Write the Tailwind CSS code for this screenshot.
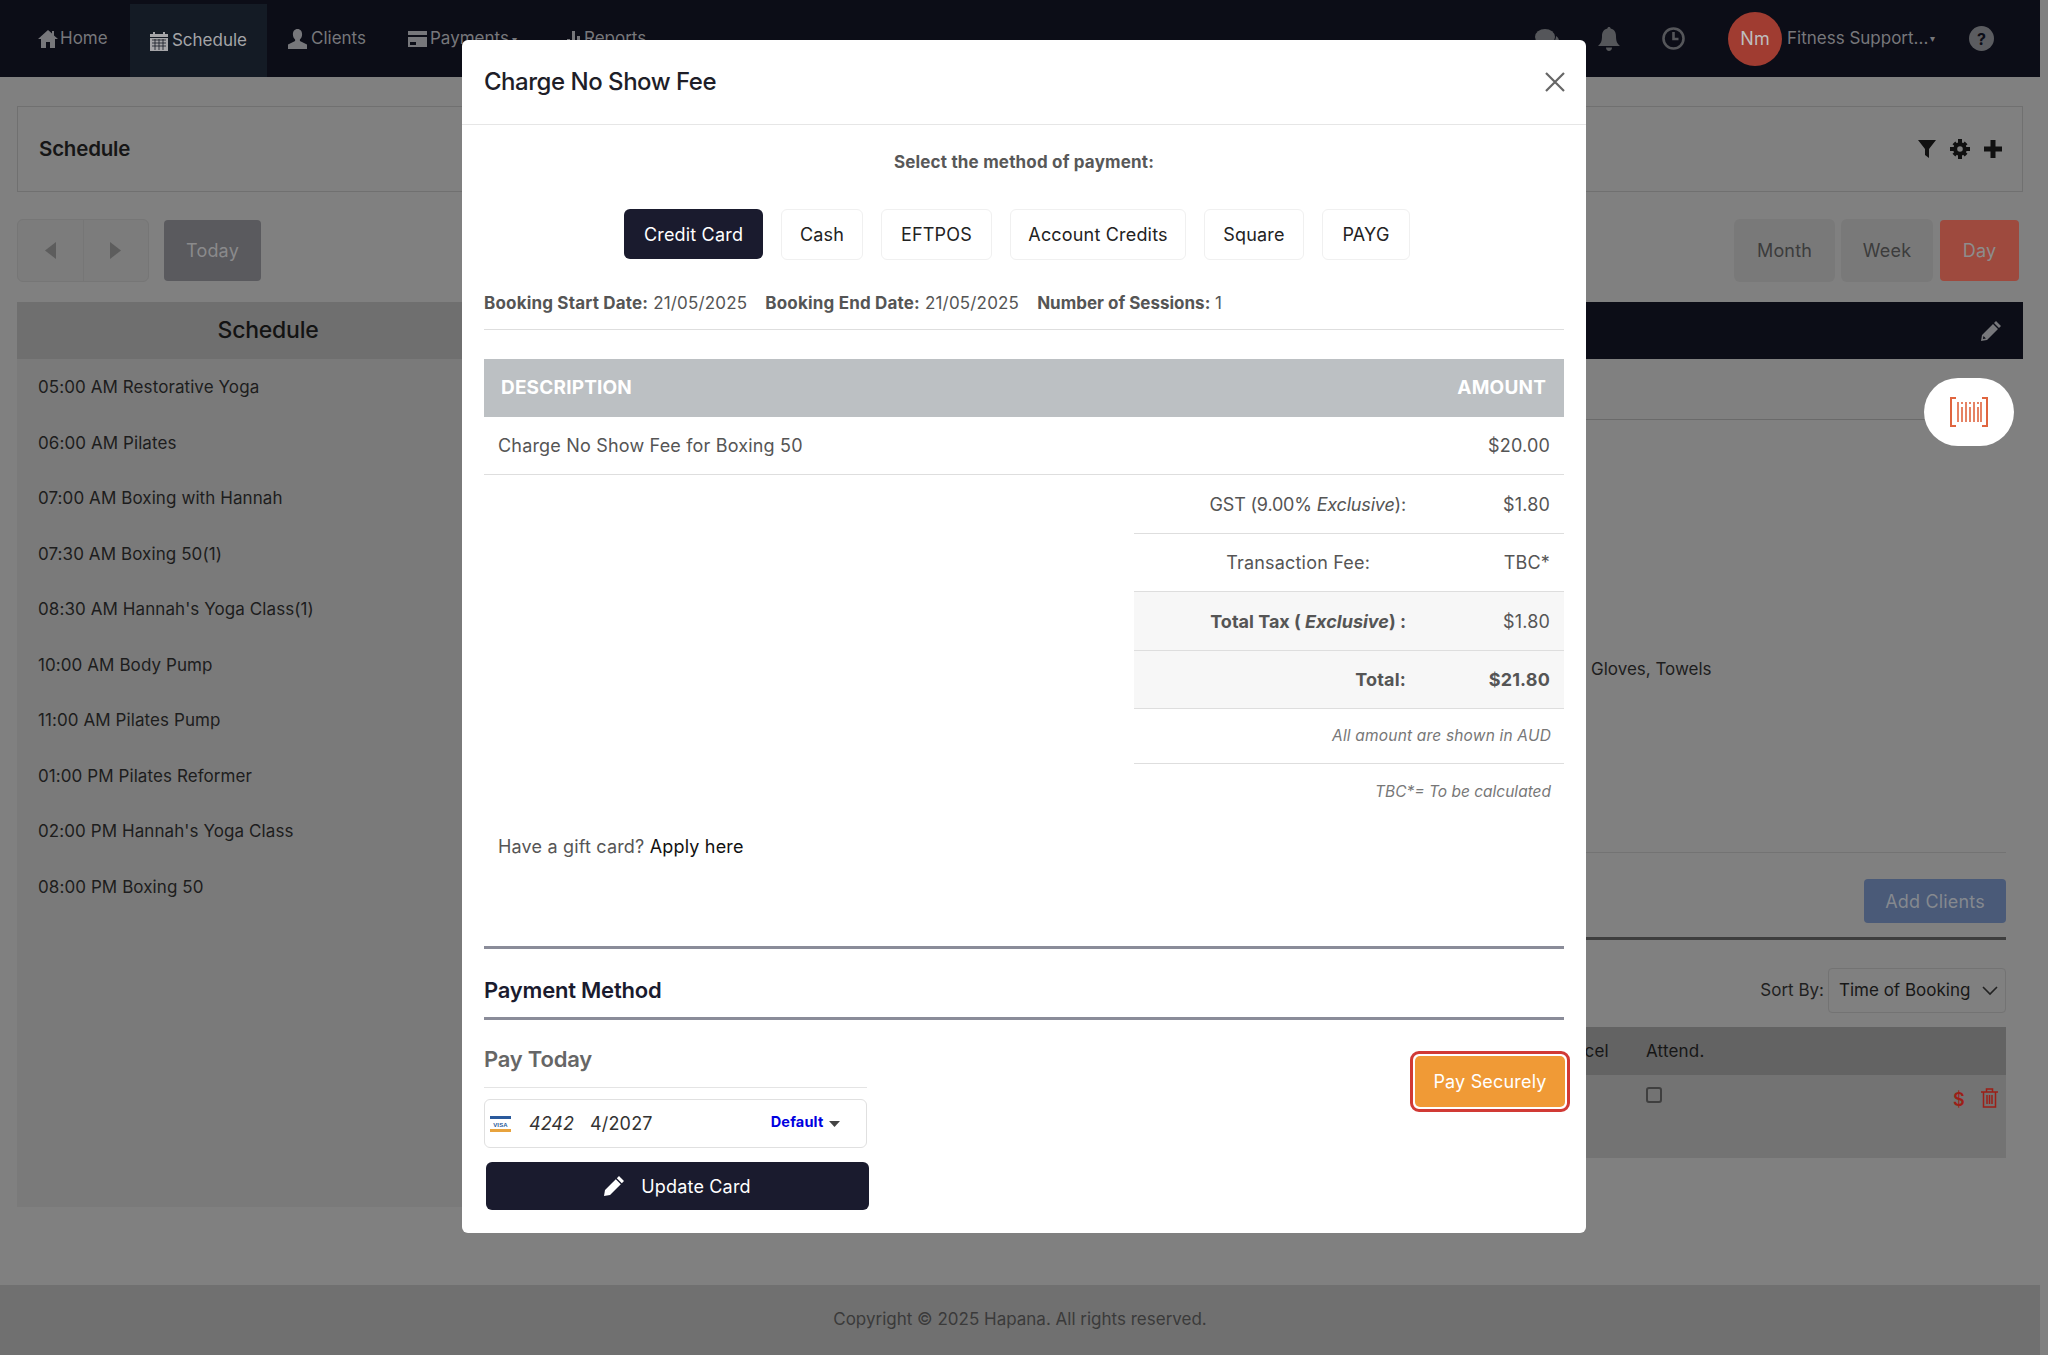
<!DOCTYPE html>
<html lang="en"><head><meta charset="utf-8"><title>Charge No Show Fee</title>
<script src="https://cdn.jsdelivr.net/npm/@tailwindcss/browser@4"></script></head>
<body class="m-0">
<div class="relative w-[2048px] h-[1355px] overflow-hidden bg-[#808080] font-['Inter',sans-serif] text-[18px] tracking-[0.01em] text-[#1c1c1c]">
 <div class="w-[2040px] h-full flex flex-col">
  <!-- navbar -->
  <nav class="h-[77px] shrink-0 bg-[#0c0d17] flex items-stretch text-[#77777b] text-[17px] tracking-normal">
   <div class="flex items-center pl-[38px] pt-[1px] w-[130px] gap-[2px]">
    <svg class="w-[20px] h-[20px]" viewBox="0 0 20 20" fill="#77777b"><path d="M10 1 L0 10 H3 V19 H8 V13 H12 V19 H17 V10 H20 L16 6.4 V2 H14 V4.6Z"/></svg><span>Home</span></div>
   <div class="flex items-center justify-center mt-[4px] w-[137px] gap-[4px] bg-[#141b25] text-[#a5a5a8]">
    <svg class="w-[18px] h-[20px]" viewBox="0 0 18 20" fill="#a5a5a8"><path d="M0 3h3V1h2v2h8V1h2v2h3v3H0zM0 7h18v13H0z"/><path d="M2 9h14M2 12h14M2 15h14M5 8v11M9 8v11M13 8v11" stroke="#141b25" stroke-width=".8"/></svg><span>Schedule</span></div>
   <div class="flex items-center pl-[21px] pt-[1px] w-[137px] gap-[4px]">
    <svg class="w-[19px] h-[20px]" viewBox="0 0 19 20" fill="#77777b"><path d="M9.5 0c3 0 4.6 2.4 4.6 5.4 0 2.2-1 4-2.2 5v1.6L19 15.5V20H0v-4.5L7.100 12v-1.600c-1.200-1-2.200-2.800-2.200-5C4.900 2.400 6.500 0 9.500 0Z"/></svg><span>Clients</span></div>
   <div class="flex items-center pl-[4px] pt-[1px] w-[163px] gap-[3px]">
    <svg class="w-[19px] h-[16px]" viewBox="0 0 19 16" fill="#77777b"><path d="M0 0h19v4H0zM0 6h19v10H0z"/><path d="M2 11h6v3H2z" fill="#0c0d17"/></svg><span>Payments</span><span class="text-[10px]">▾</span></div>
   <div class="flex items-center gap-[3px] pt-[1px]">
    <svg class="w-[14px] h-[16px]" viewBox="0 0 14 16" fill="#77777b"><path d="M0 8h3v8H0zM5 0h3v16H5zM10 5h3v11h-3z"/></svg><span>Reports</span></div>
   <div class="ml-auto flex items-center text-[#6d6d70]">
    <svg class="w-[24px] h-[22px]" viewBox="0 0 24 22" fill="#55565a"><ellipse cx="10" cy="9" rx="10" ry="8"/><path d="M5 14 4 20l6-4z"/><path d="M21 8c2 1 3 3 3 5s-1 3-2 4l.5 3-3.500-2c-2 .3-4-.2-5-1.500 4-.5 7-4 7-8.500z"/></svg>
    <svg class="ml-[39px] w-[22px] h-[24px]" viewBox="0 0 22 24" fill="#55565a"><path d="M11 0c1 0 1.600.7 1.600 1.600C16.500 2.500 18 5.500 18 9c0 5 1 7.500 4 10H0c3-2.500 4-5 4-10 0-3.500 1.500-6.500 5.400-7.400C9.400.7 10 0 11 0zM8 20.500h6c0 2-1.300 3.500-3 3.500s-3-1.500-3-3.500z"/></svg>
    <svg class="ml-[42px] w-[23px] h-[23px]" viewBox="0 0 23 23" fill="none" stroke="#55565a" stroke-width="2.600"><circle cx="11.500" cy="11.500" r="10"/><path d="M11.500 5v7h5"/></svg>
    <div class="ml-[43px] w-[54px] h-[54px] rounded-full bg-[#a03c31] flex items-center justify-center text-[#bebebe] text-[18px]">Nm</div>
    <span class="ml-[5px] text-[#77777b] text-[17px] w-[143px] whitespace-nowrap">Fitness Support...</span>
    <span class="text-[10px] text-[#77777b] w-[12px]">▾</span>
    <div class="ml-[27px] mr-[46px] w-[25px] h-[25px] rounded-full bg-[#5b5c60] flex items-center justify-center text-[#0c0d17] text-[16px] font-bold">?</div>
   </div>
  </nav>
  <!-- page head -->
  <main class="px-[17px] flex-1 flex flex-col">
   <section class="mt-[29px] h-[86px] border border-[#707070] flex items-center justify-between pl-[21px] pr-[20px]">
    <h1 class="text-[20.500px] font-semibold tracking-[-0.01em] text-[#161616]">Schedule</h1>
    <div class="flex items-center gap-[14px]">
     <svg class="w-[18px] h-[18px]" viewBox="0 0 18 18" fill="#111"><path d="M0 0h18L11 9v9l-4-3V9z"/></svg>
     <svg class="w-[20px] h-[20px]" viewBox="0 0 20 20" fill="#111"><circle cx="10" cy="10" r="4.800" fill="none" stroke="#111" stroke-width="4"/><path d="M8 0h4v4H8zM8 16h4v4H8zM0 8h4v4H0zM16 8h4v4h-4zM2.500 5.300 5.300 2.500 7.500 5 5 7.500zM14.700 17.500l2.800-2.800-2.500-2.200-2.500 2.500zM2.500 14.700l2.800 2.800 2.200-2.500L5 12.500zM17.500 5.300l-2.800-2.800L12.500 5 15 7.500z"/></svg>
     <svg class="w-[18px] h-[18px]" viewBox="0 0 18 18" fill="#111"><path d="M6.500 0h5v6.500H18v5h-6.500V18h-5v-6.500H0v-5h6.500z"/></svg>
    </div>
   </section>
   <section class="mt-[27px] h-[63px] flex items-center justify-between pr-[4px]">
    <div class="flex items-center gap-[15px]">
     <div class="flex w-[132px] h-[63px] rounded-[6px] bg-[#7c7c7c] border border-[#767676]">
      <div class="flex-1 flex items-center justify-center border-r border-[#767676]"><svg class="w-[11px] h-[17px]" viewBox="0 0 11 17" fill="#5d5d5d"><path d="M11 0v17L0 8.500z"/></svg></div>
      <div class="flex-1 flex items-center justify-center"><svg class="w-[11px] h-[17px]" viewBox="0 0 11 17" fill="#5d5d5d"><path d="M0 0v17l11-8.500z"/></svg></div>
     </div>
     <div class="w-[97px] h-[61px] rounded-[4px] bg-[#5a5a5e] text-[#8a8a8c] flex items-center justify-center">Today</div>
    </div>
    <div class="flex items-center gap-[6px] text-[#3c3c3c]">
     <div class="w-[101px] h-[63px] rounded-[6px] bg-[#797979] flex items-center justify-center">Month</div>
     <div class="w-[92px] h-[63px] rounded-[6px] bg-[#797979] flex items-center justify-center">Week</div>
     <div class="w-[79px] h-[61px] rounded-[4px] bg-[#9e4a3e] text-[#8d8d8d] flex items-center justify-center ml-[1px]">Day</div>
    </div>
   </section>
   <section class="mt-[20px] flex gap-[16px] items-start">
    <aside class="w-[502px] h-[905px] bg-[#7a7a7a] shrink-0">
     <h2 class="h-[57px] bg-[#6f6f6f] flex items-center justify-center text-[23px] font-medium tracking-[-0.01em] text-[#131313]">Schedule</h2>
     <ul class="text-[17px] tracking-[0.005em] text-[#1d1d1d] pl-[21px] pt-[1px]">
      <li class="h-[55.5px] flex items-center">05:00 AM Restorative Yoga</li>
      <li class="h-[55.5px] flex items-center">06:00 AM Pilates</li>
      <li class="h-[55.5px] flex items-center">07:00 AM Boxing with Hannah</li>
      <li class="h-[55.5px] flex items-center">07:30 AM Boxing 50(1)</li>
      <li class="h-[55.5px] flex items-center">08:30 AM Hannah's Yoga Class(1)</li>
      <li class="h-[55.5px] flex items-center">10:00 AM Body Pump</li>
      <li class="h-[55.5px] flex items-center">11:00 AM Pilates Pump</li>
      <li class="h-[55.5px] flex items-center">01:00 PM Pilates Reformer</li>
      <li class="h-[55.5px] flex items-center">02:00 PM Hannah's Yoga Class</li>
      <li class="h-[55.5px] flex items-center">08:00 PM Boxing 50</li>
     </ul>
    </aside>
    <div class="flex-1 min-w-0">
     <div class="h-[57px] bg-[#0c0d17] flex items-center justify-end pr-[22px]">
      <svg class="w-[20px] h-[20px]" viewBox="0 0 20 20" fill="#77777b"><path d="M15 0l5 5-2 2-5-5zM12 3l5 5L6 19l-6 1 1-6zM2.500 15l-.6 3 3-.6z"/></svg>
     </div>
     <div class="mx-[17px] h-[61px] border-b border-[#6a6a6a]"></div>
     <p class="pl-[1056px] pt-[238px] text-[17px] tracking-normal text-[#1d1d1d] leading-[22px]">Gloves, Towels</p>
     <div class="mx-[17px] h-[173px] border-b border-[#737373]"></div>
     <div class="mx-[17px] h-[87px] border-b-[3px] border-[#3e3e3e] flex justify-end items-start pt-[26px]">
      <div class="w-[142px] h-[44px] rounded-[4px] bg-[#4a5a78] text-[#85898f] flex items-center justify-center">Add Clients</div>
     </div>
     <div class="mx-[17px] mt-[28px] h-[45px] flex items-center justify-end gap-[4px] text-[17px] tracking-normal">
      <span class="text-[#1f1f1f]">Sort By:</span>
      <div class="w-[178px] h-[45px] border border-[#737373] rounded-[4px] flex items-center justify-between pl-[10px] pr-[7px] text-[#171717]"><span class="whitespace-nowrap">Time of Booking</span>
       <svg class="w-[16px] h-[10px] shrink-0" viewBox="0 0 16 10" fill="none" stroke="#222" stroke-width="1.600"><path d="M1 1l7 7 7-7"/></svg></div>
     </div>
     <div class="mx-[17px] mt-[14px] h-[48px] bg-[#636363] flex items-center pl-[1000px] pt-[1px] text-[#161616] text-[17px]">
      <span class="w-[56px] text-right whitespace-nowrap">Cancel</span><span class="ml-[38px]">Attend.</span>
     </div>
     <div class="mx-[17px] h-[83px] bg-[#737373] flex items-start pt-[12px]">
      <div class="ml-[1094px] w-[16px] h-[16px] rounded-[3px] border-2 border-[#3f3f3f]"></div>
      <span class="ml-[291px] mt-[3px] text-[#9c1f17] text-[18px] font-semibold leading-[20px]">$</span>
      <svg class="ml-[16px] mt-[1px] w-[17px] h-[20px]" viewBox="0 0 17 20" fill="none" stroke="#9c1f17" stroke-width="1.500"><path d="M0 4h17M5.500 4V1h6v3M2.500 4v15h12V4M6 7v9M8.500 7v9M11 7v9"/></svg>
     </div>
    </div>
   </section>
   <div class="flex-1"></div>
  </main>
  <footer class="h-[70px] shrink-0 bg-[#707070] flex items-center justify-center text-[17px] tracking-normal text-[#3a3a3a]">Copyright © 2025 Hapana. All rights reserved.</footer>
 </div>
 <!-- barcode floating button -->
 <div class="absolute left-[1924px] top-[378px] w-[90px] h-[68px] rounded-full bg-white flex items-center justify-center">
  <svg class="w-[38px] h-[30px]" viewBox="0 0 38 30" fill="none" stroke="#e0653f" stroke-width="2"><path d="M6 1H1v28h5M32 1h5v28h-5"/><path d="M8 5v20M12 10v15M16 5v20M20 10v15M24 5v20M28 10v15M31 5v20" stroke-width="1.600"/><path d="M12 5v2M20 5v2M28 5v2" stroke-width="1.600"/></svg>
 </div>
 <!-- modal -->
 <div class="absolute left-[462px] top-[40px] w-[1124px] h-[1193px] bg-white rounded-[6px] text-[#555]">
  <header class="h-[85px] border-b border-[#e6e6e6] flex items-center justify-between pl-[22px] pr-[20px]">
   <h2 class="text-[24px] font-medium tracking-[-0.02em] text-[#1e1e28]">Charge No Show Fee</h2>
   <svg class="w-[22px] h-[22px]" viewBox="0 0 22 22" stroke="#666" stroke-width="2.200"><path d="M2 2l18 18M20 2 2 20"/></svg>
  </header>
  <div class="px-[22px]">
   <p class="pt-[25px] h-[84px] text-center text-[17px] font-bold leading-[24px] text-[#585858]">Select the method of payment:</p>
   <div class="flex gap-[18px] pl-[140px] text-[#222]">
    <button class="w-[139px] h-[50px] rounded-[6px] bg-[#1a1b2e] text-white">Credit Card</button>
    <button class="w-[82px] h-[51px] rounded-[6px] border border-[#f0f0f0]">Cash</button>
    <button class="w-[111px] h-[51px] rounded-[6px] border border-[#f0f0f0]">EFTPOS</button>
    <button class="w-[176px] h-[51px] rounded-[6px] border border-[#f0f0f0]">Account Credits</button>
    <button class="w-[100px] h-[51px] rounded-[6px] border border-[#f0f0f0]">Square</button>
    <button class="w-[88px] h-[51px] rounded-[6px] border border-[#f0f0f0]">PAYG</button>
   </div>
   <div class="mt-[31px] h-[39px] border-b border-[#dedede] flex gap-[18px] text-[17px] text-[#555] leading-[24px]">
    <span><b class="font-bold">Booking Start Date:</b> 21/05/2025</span>
    <span><b class="font-bold">Booking End Date:</b> 21/05/2025</span>
    <span class="tracking-normal"><b class="font-bold">Number of Sessions:</b> 1</span>
   </div>
   <div class="mt-[29px] h-[58px] bg-[#bcc0c3] flex items-center justify-between pl-[17px] pr-[18px] text-white font-bold text-[19px]"><span>DESCRIPTION</span><span>AMOUNT</span></div>
   <div class="h-[58px] border-b border-[#dedede] flex items-center justify-between pl-[14px] pr-[14px]"><span>Charge No Show Fee for Boxing 50</span><span>$20.00</span></div>
   <div class="ml-[650px]">
    <div class="h-[59px] border-b border-[#dedede] flex items-center"><span class="w-[272px] text-right tracking-[-0.01em]">GST (9.00% <i>Exclusive</i>):</span><span class="w-[144px] text-right">$1.80</span></div>
    <div class="h-[58px] border-b border-[#dedede] flex items-center"><span class="w-[236px] text-right">Transaction Fee:</span><span class="w-[180px] text-right">TBC*</span></div>
    <div class="h-[59px] border-b border-[#dedede] bg-[#f7f7f7] flex items-center"><b class="w-[272px] text-right font-bold tracking-normal">Total Tax ( <i>Exclusive</i>) :</b><span class="w-[144px] text-right">$1.80</span></div>
    <div class="h-[58px] border-b border-[#dedede] bg-[#f7f7f7] flex items-center font-bold"><span class="w-[272px] text-right">Total:</span><span class="w-[144px] text-right">$21.80</span></div>
    <div class="h-[55px] border-b border-[#dedede] flex items-center justify-end pr-[13px] italic text-[15.500px] text-[#777]">All amount are shown in AUD</div>
    <div class="h-[55px] flex items-center justify-end pr-[13px] italic text-[15.500px] tracking-normal text-[#777]">TBC*= To be calculated</div>
   </div>
   <p class="pl-[14px] h-[131px] leading-[24px] border-b-[3px] border-[#8a8c99] text-[#555] -mt-[1px] pt-[17px]">Have a gift card? <span class="text-[#111]">Apply here</span></p>
   <h3 class="h-[71px] border-b-[3px] border-[#8a8c99] flex items-center pt-[15px] text-[22px] font-semibold tracking-[-0.01em] text-[#1a1b2e]">Payment Method</h3>
   <div class="flex justify-between items-start">
    <div class="w-[385px]">
     <h4 class="h-[68px] w-[383px] border-b border-[#e4e4e4] flex items-center text-[22px] font-semibold tracking-[-0.01em] text-[#666] pt-[11px]">Pay Today</h4>
     <div class="mt-[11px] w-[383px] h-[49px] rounded-[6px] border border-[#e0e0e0] flex items-center pl-[5px]">
      <svg class="w-[21px] h-[16px]" viewBox="0 0 21 16"><path d="M0 0h21v3H0z" fill="#2a5a9c"/><path d="M0 13h21v3H0z" fill="#e8a33d"/><text x="10.500" y="10.500" text-anchor="middle" font-size="6" font-weight="700" fill="#2a5a9c" font-family="Liberation Sans">VISA</text></svg>
      <i class="ml-[18px] text-[#333] tracking-normal">4242</i><span class="ml-[16px] text-[#333]">4/2027</span>
      <b class="ml-[118px] -mt-[4px] text-[14.500px] font-bold text-[#0000e0]">Default</b>
      <svg class="ml-[6px] w-[11px] h-[6px]" viewBox="0 0 11 6" fill="#444"><path d="M0 0h11L5.500 6z"/></svg>
     </div>
     <button class="mt-[14px] ml-[2px] w-[383px] h-[48px] rounded-[6px] bg-[#1a1b2e] text-white flex items-center justify-center gap-[17px]">
      <svg class="w-[20px] h-[20px]" viewBox="0 0 20 20" fill="#fff"><path d="M15 0l5 5-2.200 2.200-5-5zM11.800 3.200l5 5L6 19 0 20l1-6z"/></svg><span>Update Card</span></button>
    </div>
    <div class="mt-[31px] -mr-[6px] w-[160px] h-[61px] rounded-[9px] border-[3px] border-[#d13a35] p-[2px]">
     <button class="w-full h-full rounded-[5px] bg-[#f09a36] text-white">Pay Securely</button>
    </div>
   </div>
  </div>
 </div>
</div>
</body></html>
